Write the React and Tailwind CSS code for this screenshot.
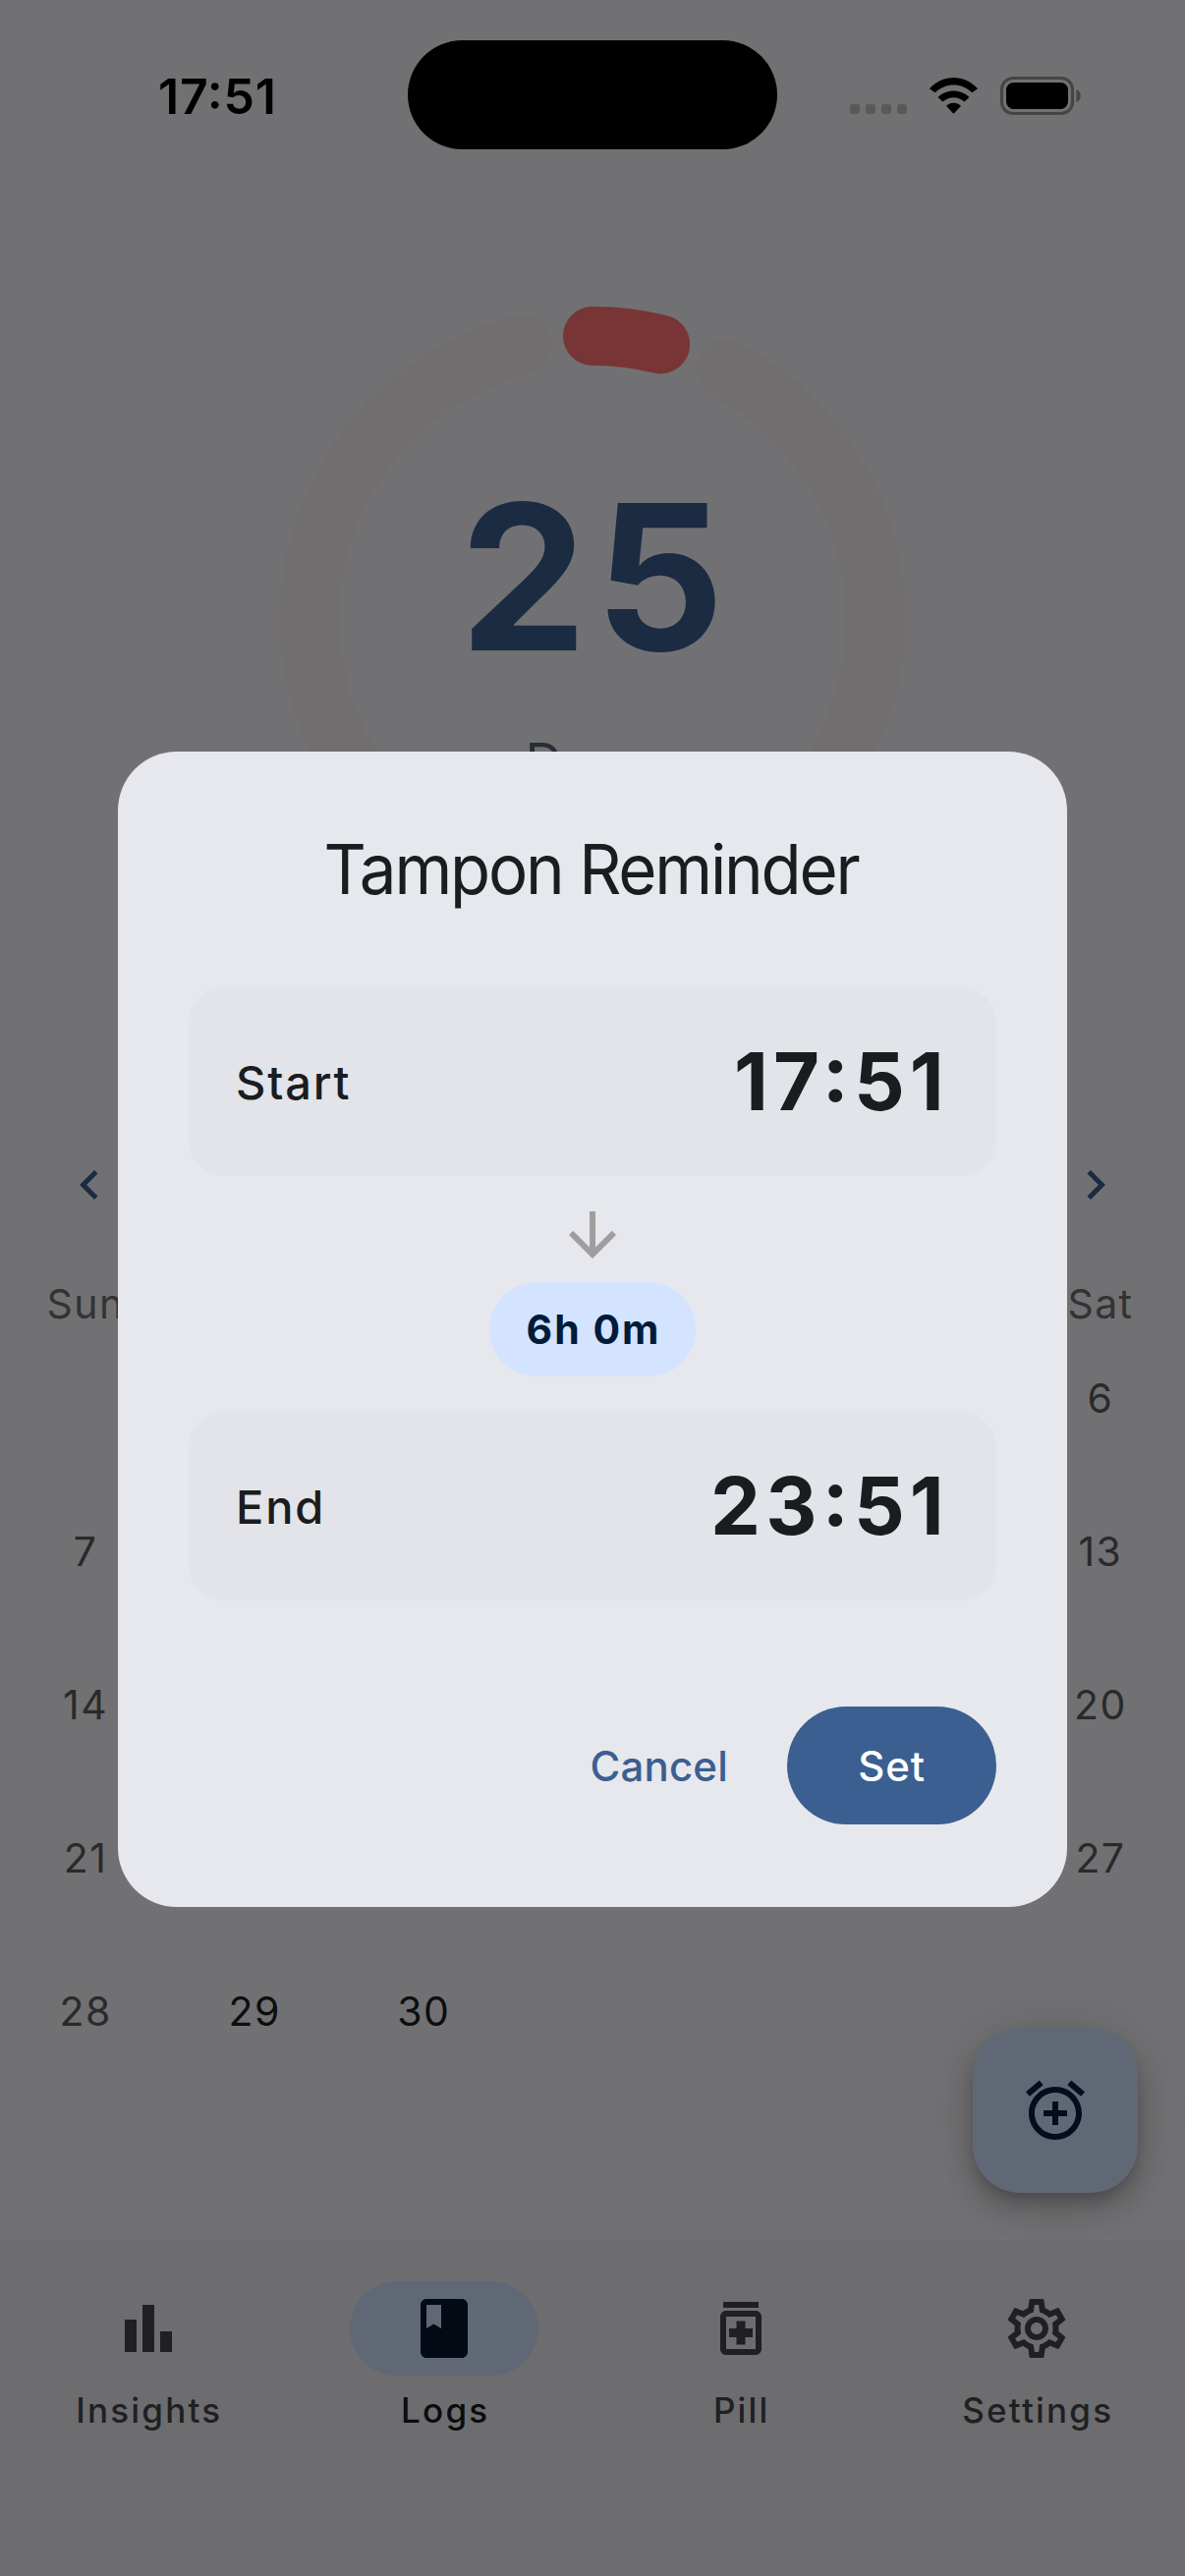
import { MdOutlineSettings } from "react-icons/md";

const R = 288;
const point = (deg) => {
  const a = (deg * Math.PI) / 180;
  return `${320 + R * Math.sin(a)} ${320 - R * Math.cos(a)}`;
};
const arc = (from, to) =>
  `M${point(from)} A${R} ${R} 0 ${to - from > 180 ? 1 : 0} 1 ${point(to)}`;

function Icon({ d, className }) {
  return (
    <svg viewBox="0 0 24 24" className={className} fill="currentColor" fillRule="evenodd">
      <path d={d} />
    </svg>
  );
}

const icons = {
  down: "M20 12l-1.41-1.41L13 16.17V4h-2v12.17l-5.58-5.59L4 12l8 8 8-8z",
  left: "M15.41 7.41L14 6l-6 6 6 6 1.41-1.41L10.83 12z",
  right: "M10 6L8.59 7.41 13.17 12l-4.58 4.59L10 18l6-6z",
  bars: "M4 9h4v11H4zM16 13h4v7h-4zM10 4h4v16h-4z",
  book: "M18 2H6c-1.1 0-2 .9-2 2v16c0 1.1.9 2 2 2h12c1.1 0 2-.9 2-2V4c0-1.1-.9-2-2-2zM6 4h5v8l-2.5-1.5L6 12V4z",
  pill: "M6 3h12v2H6zM17 6H7c-1.1 0-2 .9-2 2v11c0 1.1.9 2 2 2h10c1.1 0 2-.9 2-2V8c0-1.1-.9-2-2-2zm0 13H7V8h10v11zM10.5 17.5h3V15H16v-3h-2.5V9.5h-3V12H8v3h2.5z",
  alarm:
    "M7.88 3.39L6.6 1.86 2 5.71l1.29 1.53 4.59-3.85zM22 5.72l-4.6-3.86-1.29 1.53 4.6 3.86L22 5.72zM12 4c-4.97 0-9 4.03-9 9s4.02 9 9 9c4.97 0 9-4.03 9-9s-4.03-9-9-9zm0 16c-3.87 0-7-3.13-7-7s3.13-7 7-7 7 3.13 7 7-3.13 7-7 7zm1-11h-2v3H8v2h3v3h2v-3h3v-2h-3V9z",
};

function StatusBar() {
  return (
    <header className="flex h-[186px] items-start text-black">
      <div className="w-[415px] pt-[68px] pl-[161px] text-[50px] leading-[60px] font-semibold tracking-[0.8px] [font-feature-settings:'case']">
        17:51
      </div>
      <div className="mt-[41px] h-[111px] w-[376px] rounded-full bg-black" />
      <div className="mt-[78px] ml-[74px] flex h-[39px] items-start">
        <div className="mt-[28px] flex gap-[6px]">
          {[0, 1, 2, 3].map((i) => (
            <span key={i} className="h-[10px] w-[10px] rounded-[3px] bg-[#59595a]" />
          ))}
        </div>
        <svg viewBox="0 0 51 37" className="mt-px ml-[22px] h-[37px] w-[51px]">
          <path d="M25.5 7.6c6.9 0 13.3 2.7 18.1 7.2.4.4 1 .4 1.4 0l5.1-3.6C35.6-3.7 15.4-3.7.9 11.2L6 14.8c.4.4 1 .4 1.4 0C12.2 10.3 18.6 7.6 25.5 7.6z" />
          <path d="M25.5 20.2c3.8 0 7.4 1.4 10.2 3.9.4.4 1 .4 1.4 0l4.4-4c-8.5-8.9-23.5-8.9-32 0l4.4 4c.4.4 1 .4 1.4 0 2.8-2.5 6.4-3.9 10.2-3.9z" />
          <path d="M33 28.8c-4.3-4.1-10.7-4.1-15 0l6.7 7.3c.5.5 1.1.5 1.6 0z" />
        </svg>
        <svg viewBox="0 0 82 39" className="ml-[22px] h-[39px] w-[82px]">
          <rect x="1.5" y="1.5" width="72" height="36" rx="11.5" fill="none" stroke="#454546" strokeWidth="3" />
          <rect x="6" y="6" width="63" height="27" rx="7.5" />
          <path d="M77.5 13v13c2.6-1 4.2-3.6 4.2-6.5s-1.6-5.5-4.2-6.5z" fill="#454546" />
        </svg>
      </div>
    </header>
  );
}

function CycleRing() {
  return (
    <section className="mt-[124px] grid h-[640px] w-[640px] shrink-0 self-center">
      <svg viewBox="0 0 640 640" className="col-start-1 row-start-1 h-[640px] w-[640px]" fill="none" strokeWidth="60" strokeLinecap="round">
        <path d={arc(28.2, 345.6)} stroke="#726d6e" />
        <path d={arc(0, 13.9)} stroke="#783535" />
      </svg>
      <div className="col-start-1 row-start-1 flex flex-col items-center pt-[153px]">
        <div className="h-[248px] pl-[7px] text-[206px] leading-[248px] font-bold tracking-[8px] text-[#1b2b42]">25</div>
        <div className="mt-[35px] text-[53px] leading-[60px] tracking-[3px] text-[#282e37]">Days</div>
      </div>
    </section>
  );
}

const weekdays = ["Sun", "Mon", "Tue", "Wed", "Thu", "Fri", "Sat"];

function Calendar() {
  return (
    <section className="mt-[226px]">
      <div className="flex h-[60px] justify-between px-[61px] text-[#1b2b42]">
        <Icon d={icons.left} className="h-[60px] w-[60px]" />
        <Icon d={icons.right} className="h-[60px] w-[60px]" />
      </div>
      <div className="mt-[60px] grid grid-cols-7 pl-px text-center text-[41px] leading-[62px] tracking-[1.4px] text-[#333334]">
        {weekdays.map((d) => (
          <span key={d}>{d}</span>
        ))}
      </div>
      <div className="mt-[-12px] grid auto-rows-[156px] grid-cols-7 pl-px text-[41px] tracking-[1.4px] text-[#2a2a2b]">
        {Array.from({ length: 30 }, (_, i) => (
          <span
            key={i}
            className={
              (i === 0 ? "col-start-2 " : "") +
              "flex items-center justify-center " +
              (i > 27 ? "text-[#0d0e10]" : "")
            }
          >
            {i + 1}
          </span>
        ))}
      </div>
    </section>
  );
}

function NavItem({ label, active, children }) {
  return (
    <div className={"flex flex-1 flex-col items-center pt-[42px] " + (active ? "text-[#0b0c0e]" : "text-[#1f2023]")}>
      <div className={"flex h-[96px] w-[192px] items-center justify-center rounded-full " + (active ? "bg-[#616875] text-[#040a14]" : "")}>
        {children}
      </div>
      <div className="mt-[11px] pl-[2px] text-[35px] leading-[48px] font-medium tracking-[2.2px]">{label}</div>
    </div>
  );
}

function NavBar() {
  return (
    <nav className="flex h-[342px] w-full bg-[#6d6d6f]">
      <NavItem label="Insights">
        <Icon d={icons.bars} className="h-[72px] w-[72px]" />
      </NavItem>
      <NavItem label="Logs" active>
        <Icon d={icons.book} className="h-[72px] w-[72px]" />
      </NavItem>
      <NavItem label="Pill">
        <Icon d={icons.pill} className="h-[72px] w-[72px]" />
      </NavItem>
      <NavItem label="Settings">
        <MdOutlineSettings className="h-[72px] w-[72px]" />
      </NavItem>
    </nav>
  );
}

function TimeRow({ label, time }) {
  return (
    <div className="flex h-[192px] items-center justify-between rounded-[36px] bg-[#e3e4e9] pt-[2px] pr-[48px] pl-[48px]">
      <span className="text-[47px] font-medium tracking-[1.8px]">{label}</span>
      <span className="text-[81px] font-bold tracking-[5.2px] [font-feature-settings:'case']">{time}</span>
    </div>
  );
}

function ReminderDialog() {
  return (
    <div className="absolute top-[765px] left-[120px] flex h-[1176px] w-[966px] flex-col rounded-[60px] bg-[#e7e8ed] px-[72px] pt-[72px] text-[#1a1c20]">
      <h1 className="scale-x-96 pr-[3px] text-center text-[70px] leading-[96px] tracking-[-2.3px]">Tampon Reminder</h1>
      <div className="mt-[72px] flex flex-col">
        <TimeRow label="Start" time="17:51" />
        <div className="flex flex-col items-center pt-[24px] pb-[36px]">
          <Icon d={icons.down} className="h-[72px] w-[72px] text-[#9e9e9e]" />
          <div className="mt-[12px] flex h-[96px] w-[210px] items-center justify-center rounded-full bg-[#d4e3ff] pt-px pl-[2px] text-[41px] font-bold tracking-[2px] text-[#001c3a]">
            6h 0m
          </div>
        </div>
        <TimeRow label="End" time="23:51" />
      </div>
      <div className="mt-[108px] flex h-[120px] items-center justify-end">
        <span className="mr-[60px] text-[42px] font-medium tracking-[0.2px] text-[#3b5f90]">Cancel</span>
        <span className="flex h-[120px] w-[213px] items-center justify-center rounded-full bg-[#3b5f90] text-[42px] font-medium tracking-[0.8px] text-white">
          Set
        </span>
      </div>
    </div>
  );
}

export default function App() {
  return (
    <div className="relative flex h-[2622px] w-[1206px] flex-col overflow-hidden bg-[#717173] font-['Inter',sans-serif]">
      <StatusBar />
      <main className="flex h-[2094px] shrink-0 flex-col">
        <CycleRing />
        <Calendar />
      </main>
      <NavBar />
      <div className="absolute top-[2064px] left-[990px] flex h-[168px] w-[168px] items-center justify-center rounded-[48px] bg-[#616875] text-[#010e1d] shadow-[0_9px_15px_-3px_rgba(0,0,0,0.2),0_18px_30px_rgba(0,0,0,0.14),0_3px_54px_rgba(0,0,0,0.12)]">
        <Icon d={icons.alarm} className="h-[72px] w-[72px]" />
      </div>
      <ReminderDialog />
    </div>
  );
}
